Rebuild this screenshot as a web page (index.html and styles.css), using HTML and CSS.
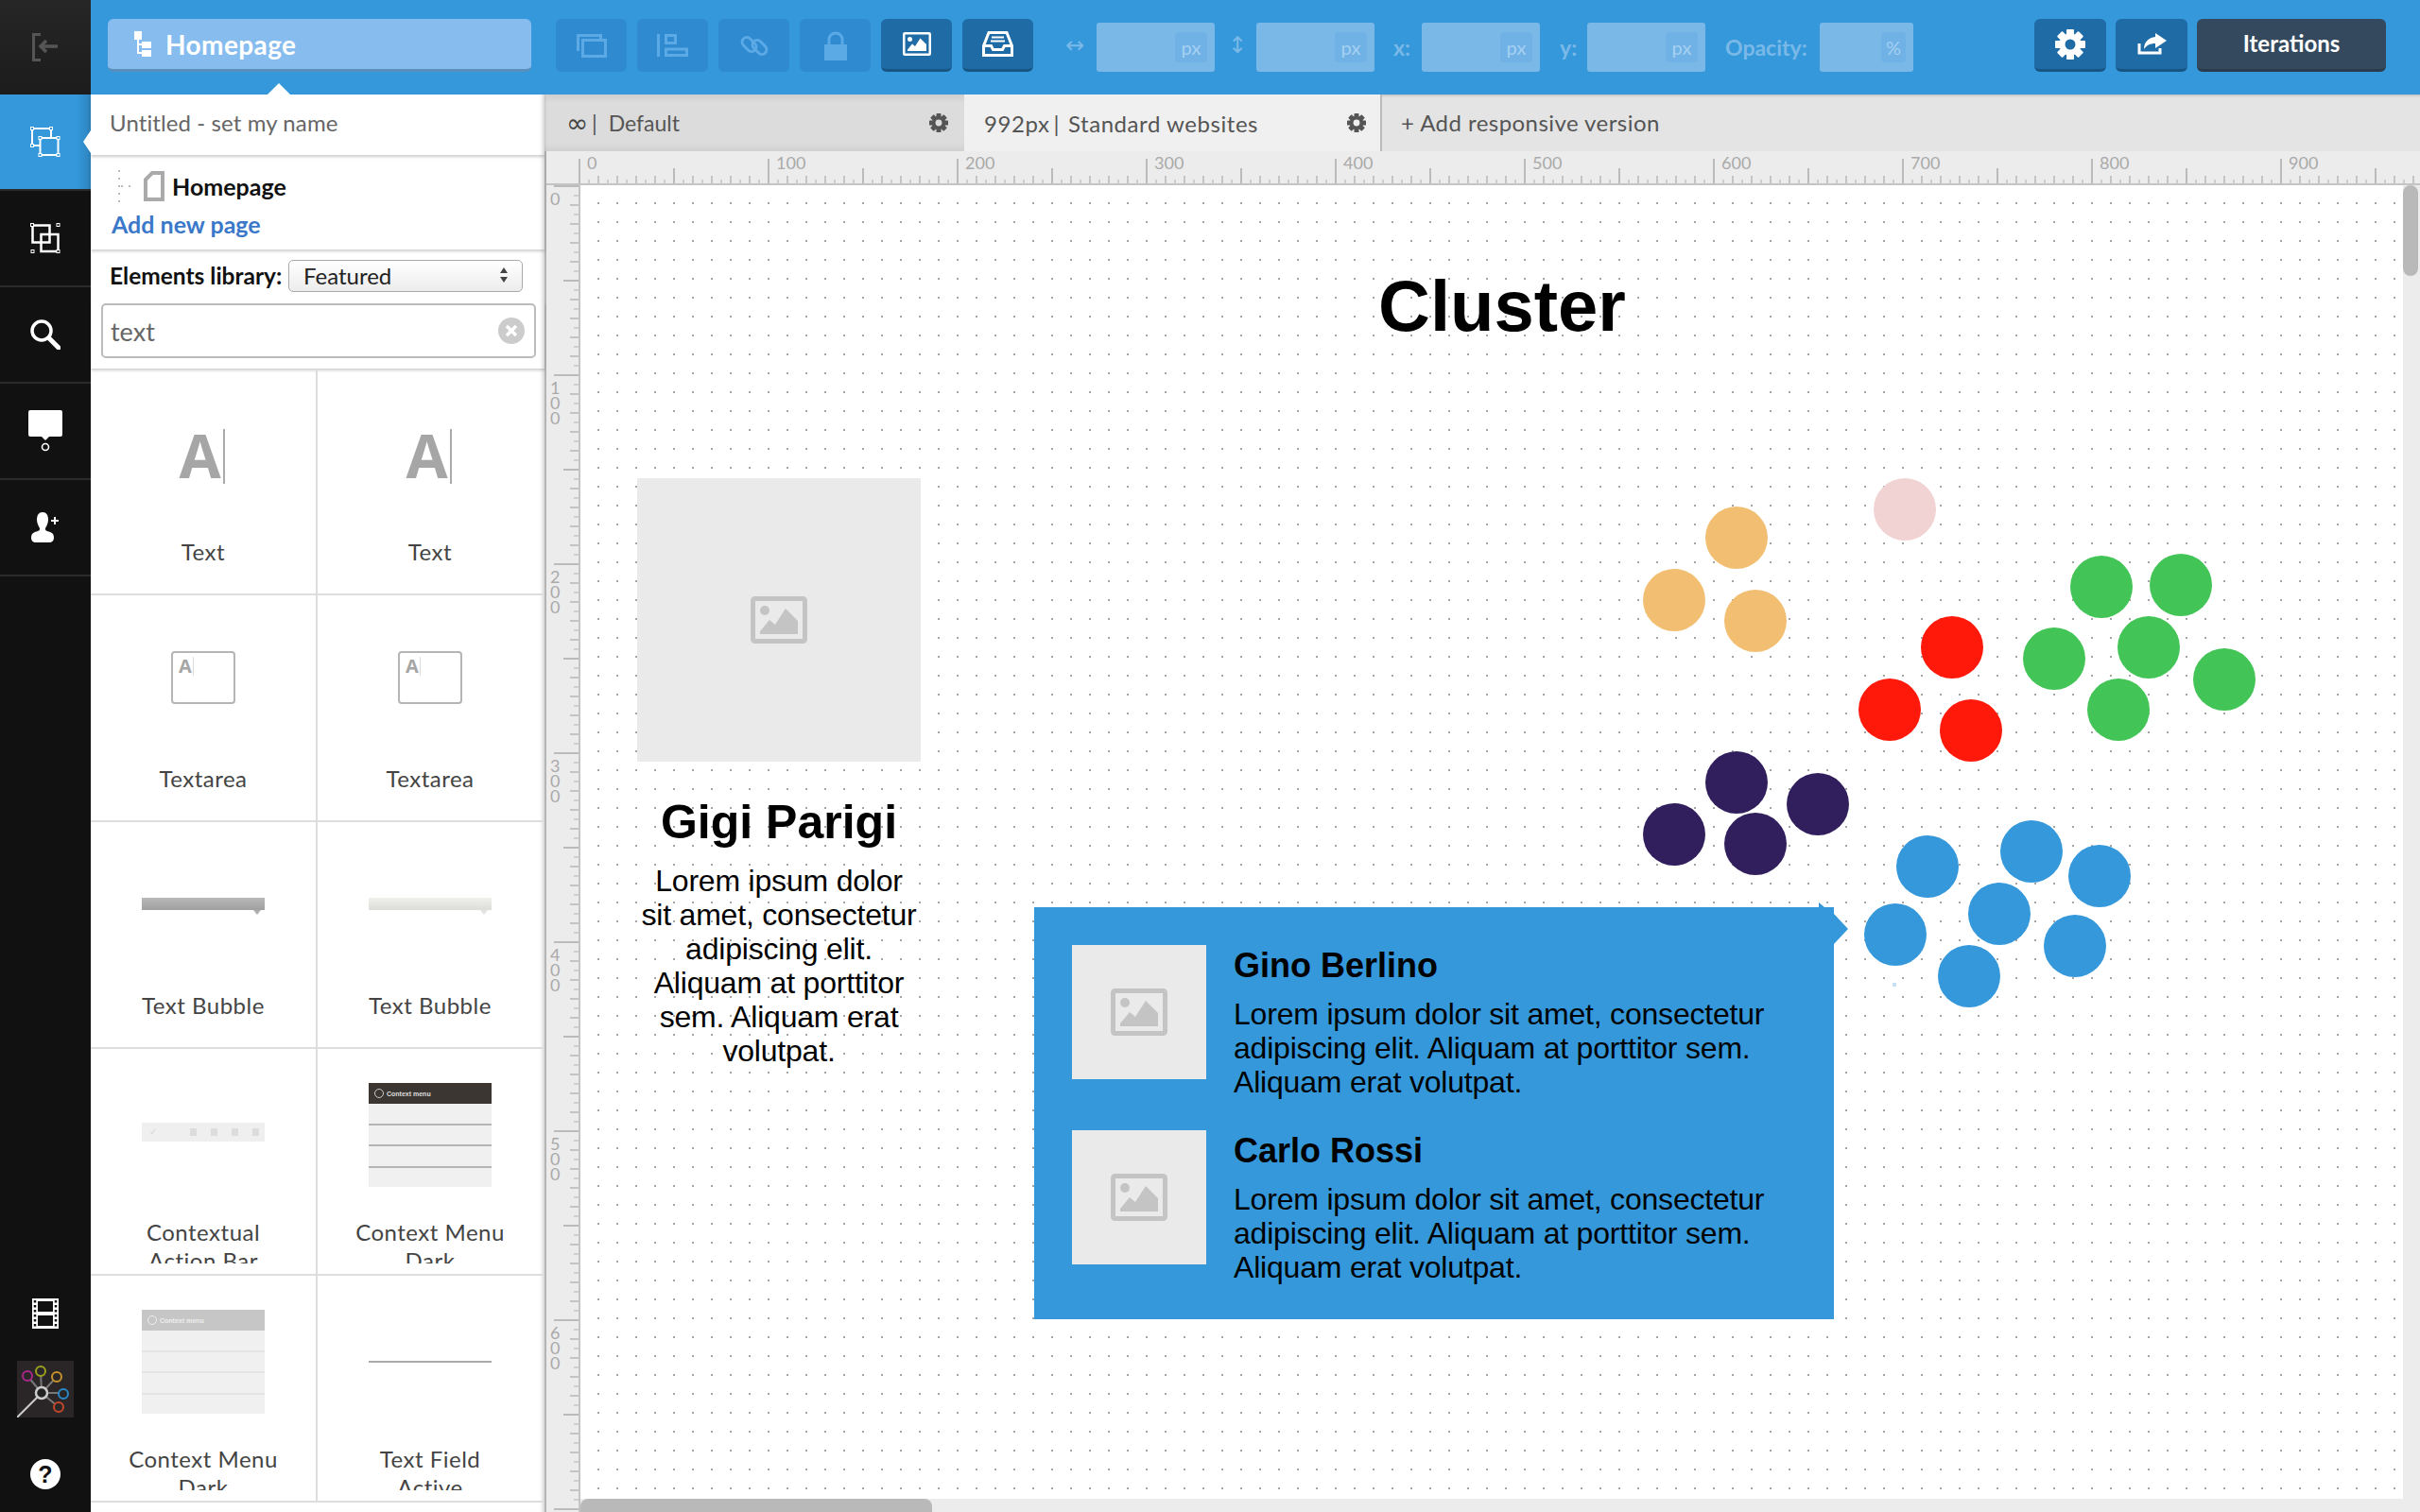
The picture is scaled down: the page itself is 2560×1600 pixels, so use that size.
FILE: index.html
```html
<!DOCTYPE html>
<html lang="en">
<head>
    <meta charset="UTF-8">
    <title>Cluster</title>
    <link rel="stylesheet" href="styles.css">
</head>
<body>

<svg class="sprites" width="0" height="0">
    <symbol id="gear" viewBox="0 0 32 32">
        <g fill="currentColor">
            <rect x="12" y="0" width="8" height="8" rx="1"/>
            <rect x="12" y="0" width="8" height="8" rx="1" transform="rotate(45 16 16)"/>
            <rect x="12" y="0" width="8" height="8" rx="1" transform="rotate(90 16 16)"/>
            <rect x="12" y="0" width="8" height="8" rx="1" transform="rotate(135 16 16)"/>
            <rect x="12" y="0" width="8" height="8" rx="1" transform="rotate(180 16 16)"/>
            <rect x="12" y="0" width="8" height="8" rx="1" transform="rotate(225 16 16)"/>
            <rect x="12" y="0" width="8" height="8" rx="1" transform="rotate(270 16 16)"/>
            <rect x="12" y="0" width="8" height="8" rx="1" transform="rotate(315 16 16)"/>
        </g>
        <circle cx="16" cy="16" r="8.5" fill="none" stroke="currentColor" stroke-width="6"/>
    </symbol>
    <symbol id="picture" viewBox="0 0 60 50">
        <rect x="2.5" y="2.5" width="55" height="45" rx="2" fill="none" stroke="currentColor" stroke-width="5"/>
        <circle cx="15" cy="15" r="5" fill="currentColor"/>
        <polygon points="10,40 10,37 20,25 26,30 37,13 50,26 50,40" fill="currentColor"/>
    </symbol>
</svg>

<div class="app">
    <nav class="rail">
        <div class="rail-exit">
            <svg width="28" height="30" viewBox="0 0 28 30" fill="none" stroke="#555" stroke-width="3">
                <path d="M9 1.5H1.5v27H9"/>
                <path d="M27 14H9M15 8l-6 6 6 6" stroke-width="3.5"/>
            </svg>
        </div>
        <div class="rail-item rail-item-active">
            <svg width="32" height="32" viewBox="0 0 32 32" fill="none" stroke="#fff" stroke-width="2">
                <rect x="2" y="2" width="20" height="18"/>
                <rect x="10.5" y="12" width="19" height="18" fill="#3498db"/>
                <rect x="0.5" y="0.5" width="3" height="3" fill="#3498db" stroke-width="1"/>
                <rect x="20.5" y="0.5" width="3" height="3" fill="#3498db" stroke-width="1"/>
                <rect x="0.5" y="18.5" width="3" height="3" fill="#3498db" stroke-width="1"/>
                <rect x="9" y="10.5" width="3" height="3" fill="#3498db" stroke-width="1"/>
                <rect x="28" y="10.5" width="3" height="3" fill="#3498db" stroke-width="1"/>
                <rect x="9" y="28.5" width="3" height="3" fill="#3498db" stroke-width="1"/>
                <rect x="28" y="28.5" width="3" height="3" fill="#3498db" stroke-width="1"/>
            </svg>
        </div>
        <div class="rail-item">
            <svg width="32" height="32" viewBox="0 0 32 32" fill="none" stroke="#fff">
                <rect x="2.5" y="2.5" width="18" height="18" stroke-width="2.5"/>
                <rect x="11.5" y="12" width="18" height="18" stroke-width="2.5"/>
                <rect x="28" y="0.5" width="3" height="3" stroke-width="1"/>
                <rect x="1" y="28.5" width="3" height="3" stroke-width="1"/>
                <rect x="0.5" y="0.5" width="3" height="3" fill="#111" stroke-width="1"/>
                <rect x="28" y="28.5" width="3" height="3" fill="#111" stroke-width="1"/>
            </svg>
        </div>
        <div class="rail-item">
            <svg width="32" height="32" viewBox="0 0 32 32" fill="none" stroke="#fff">
                <circle cx="12" cy="12" r="10" stroke-width="3.5"/>
                <path d="M20 20l10 10" stroke-width="5" stroke-linecap="round"/>
            </svg>
        </div>
        <div class="rail-item">
            <svg width="36" height="44" viewBox="0 0 36 44">
                <path d="M2 0h32a2 2 0 0 1 2 2v24a2 2 0 0 1-2 2H22l-4 4-4-4H2a2 2 0 0 1-2-2V2a2 2 0 0 1 2-2z" fill="#fff"/>
                <circle cx="18" cy="39" r="3.5" fill="none" stroke="#fff" stroke-width="1.6"/>
            </svg>
        </div>
        <div class="rail-item">
            <svg width="30" height="32" viewBox="0 0 30 32" fill="#fff">
                <path d="M12 0c4 0 6 3 6 8 0 4-2 7-3 9-.5 2 1 3 5 4 3 1 4 3 4 6 0 3-2 5-5 5H5c-3 0-5-2-5-5 0-3 1-5 4-6 4-1 5.500-2 5-4-1-2-3-5-3-9 0-5 2-8 6-8z"/>
                <path d="M24 5h2v3h3v2h-3v3h-2v-3h-3V8h3z"/>
            </svg>
        </div>
        <div class="rail-bottom">
            <svg width="28" height="32" viewBox="0 0 28 32">
                <rect width="28" height="32" fill="#fff"/>
                <rect x="6" y="3" width="16" height="11" fill="#111"/>
                <rect x="6" y="18" width="16" height="11" fill="#111"/>
                <path d="M3 2v28M25 2v28" stroke="#111" stroke-width="2.500" stroke-dasharray="2.500 2.500"/>
            </svg>
            <svg class="rail-logo" width="60" height="60" viewBox="0 0 60 60" fill="none" stroke-width="2">
                <rect width="60" height="60" fill="#2a2627"/>
                <path d="M26 34L11 16M26 34L25 11M26 34L42 17M26 34H49M26 34L44 49" stroke="#777"/>
                <path d="M26 34L0 60" stroke="#ccc"/>
                <circle cx="26" cy="34" r="6" fill="#222" stroke="#ccc" stroke-width="2.500"/>
                <circle cx="11" cy="16" r="5" fill="#2a2627" stroke="#a8278b"/>
                <circle cx="25" cy="11" r="5" fill="#2a2627" stroke="#9ba11f"/>
                <circle cx="42" cy="17" r="5" fill="#2a2627" stroke="#c4932a"/>
                <circle cx="49" cy="35" r="5" fill="#2a2627" stroke="#2a88c4"/>
                <circle cx="44" cy="49" r="5" fill="#2a2627" stroke="#c4472a"/>
            </svg>
            <div class="rail-help">?</div>
        </div>
    </nav>

    <div class="main">
        <header class="topbar">
            <div class="page-btn">
                <svg width="18" height="27" viewBox="0 0 18 27" fill="#fff">
                    <rect width="8" height="9"/>
                    <rect x="3" y="9" width="2" height="15"/>
                    <rect x="8" y="11" width="10" height="7"/>
                    <rect x="8" y="20" width="10" height="7"/>
                    <rect x="5" y="13" width="3" height="2"/>
                    <rect x="5" y="22" width="3" height="2"/>
                </svg>
                <span>Homepage</span>
            </div>
            <div class="tool-btn">
                <svg width="32" height="25" viewBox="0 0 32 25" fill="none" stroke="currentColor" stroke-width="3">
                    <path d="M1.500 18V1.500h24V6"/>
                    <rect x="6.500" y="6.500" width="24" height="17"/>
                </svg>
            </div>
            <div class="tool-btn">
                <svg width="33" height="24" viewBox="0 0 33 24" fill="none" stroke="currentColor" stroke-width="3">
                    <path d="M1.500 0v24"/>
                    <rect x="9.500" y="1.500" width="10" height="8"/>
                    <rect x="9.500" y="16" width="22" height="6.500"/>
                </svg>
            </div>
            <div class="tool-btn">
                <svg width="30" height="27" viewBox="0 0 30 27" fill="none" stroke="currentColor" stroke-width="3">
                    <rect x="1" y="7" width="17" height="10" rx="5" transform="rotate(45 9.500 12)"/>
                    <rect x="12" y="10" width="17" height="10" rx="5" transform="rotate(45 20.500 15)"/>
                </svg>
            </div>
            <div class="tool-btn">
                <svg width="24" height="31" viewBox="0 0 24 31">
                    <rect y="14" width="24" height="17" fill="currentColor"/>
                    <path d="M5 15V9a7 7 0 0 1 14 0v6" fill="none" stroke="currentColor" stroke-width="3"/>
                </svg>
            </div>
            <div class="tool-btn tool-btn-on">
                <svg width="32" height="25"><use href="#picture"/></svg>
            </div>
            <div class="tool-btn tool-btn-on">
                <svg width="33" height="27" viewBox="0 0 33 27" fill="none" stroke="currentColor" stroke-width="3">
                    <path d="M7 1.500h19l5.500 14v10h-30v-10z"/>
                    <path d="M1.500 15.500h8l2 4h10l2-4h8"/>
                    <path d="M10 6.500h13M9 10.500h15" stroke-width="2"/>
                </svg>
            </div>
            <span class="size-sign sign-w">↔</span>
            <div class="num-field"><span class="unit">px</span></div>
            <span class="size-sign sign-h">↕</span>
            <div class="num-field"><span class="unit">px</span></div>
            <span class="field-label label-x">x:</span>
            <div class="num-field"><span class="unit">px</span></div>
            <span class="field-label label-y">y:</span>
            <div class="num-field"><span class="unit">px</span></div>
            <span class="field-label label-op">Opacity:</span>
            <div class="num-field num-field-small"><span class="unit">%</span></div>
            <div class="top-right">
                <div class="tool-btn tool-btn-on tool-btn-thin">
                    <svg width="32" height="32"><use href="#gear"/></svg>
                </div>
                <div class="tool-btn tool-btn-on tool-btn-thin">
                    <svg width="31" height="23" viewBox="0 0 31 23">
                        <path d="M2 11v10h22v-5" fill="none" stroke="currentColor" stroke-width="3"/>
                        <path d="M19 0l12 8-12 8v-5c-6 0-9 2-12 6 0-8 5-12 12-13z" fill="currentColor"/>
                    </svg>
                </div>
                <div class="iter-btn">Iterations</div>
            </div>
        </header>

        <div class="work">
            <aside class="panel">
                <div class="panel-name">Untitled - set my name</div>
                <div class="panel-tree">
                    <div class="tree-row">
                        <svg width="20" height="36" viewBox="0 0 20 36" fill="none" stroke="#bbb" stroke-width="2" stroke-dasharray="2 6">
                            <path d="M2 1v34M4 18h16"/>
                        </svg>
                        <svg width="22" height="32" viewBox="0 0 22 32" fill="#fff" stroke="#aaa" stroke-width="4">
                            <path d="M9 2h11v28H2V9z"/>
                        </svg>
                        <span class="tree-name">Homepage</span>
                    </div>
                    <div class="add-page">Add new page</div>
                </div>
                <div class="lib-row">
                    <span class="lib-label">Elements library:</span>
                    <div class="lib-select">
                        <span>Featured</span>
                        <svg width="10" height="16" viewBox="0 0 10 16" fill="#444"><path d="M5 0l4 6H1zM5 16l4-6H1z"/></svg>
                    </div>
                </div>
                <div class="search-row">
                    <div class="search-box">
                        <span>text</span>
                        <svg width="28" height="28" viewBox="0 0 28 28">
                            <circle cx="14" cy="14" r="14" fill="#ccc"/>
                            <path d="M9 9l10 10M19 9L9 19" stroke="#fff" stroke-width="3.500"/>
                        </svg>
                    </div>
                </div>
                <div class="lib-grid">
                    <div class="lib-cell">
                        <div class="thumb"><span class="thumb-a">A</span><i class="thumb-caret"></i></div>
                        <div class="lib-name">Text</div>
                    </div>
                    <div class="lib-cell">
                        <div class="thumb"><span class="thumb-a">A</span><i class="thumb-caret"></i></div>
                        <div class="lib-name">Text</div>
                    </div>
                    <div class="lib-cell">
                        <div class="thumb"><div class="area-box"><span>A</span><i></i></div></div>
                        <div class="lib-name">Textarea</div>
                    </div>
                    <div class="lib-cell">
                        <div class="thumb"><div class="area-box"><span>A</span><i></i></div></div>
                        <div class="lib-name">Textarea</div>
                    </div>
                    <div class="lib-cell">
                        <div class="thumb"><div class="bubble"></div></div>
                        <div class="lib-name">Text Bubble</div>
                    </div>
                    <div class="lib-cell">
                        <div class="thumb"><div class="bubble bubble-light"></div></div>
                        <div class="lib-name">Text Bubble</div>
                    </div>
                    <div class="lib-cell">
                        <div class="thumb"><div class="action-bar"><span>✓</span><i></i><i></i><i></i><i></i></div></div>
                        <div class="lib-name">Contextual Action Bar</div>
                    </div>
                    <div class="lib-cell">
                        <div class="thumb thumb-top">
                            <div class="ctx-menu">
                                <div class="ctx-head"><i></i><span>Context menu</span></div>
                                <div class="ctx-row"></div><div class="ctx-row"></div><div class="ctx-row"></div><div class="ctx-row"></div>
                            </div>
                        </div>
                        <div class="lib-name">Context Menu Dark</div>
                    </div>
                    <div class="lib-cell">
                        <div class="thumb thumb-top">
                            <div class="ctx-menu ctx-light">
                                <div class="ctx-head"><i></i><span>Context menu</span></div>
                                <div class="ctx-row"></div><div class="ctx-row"></div><div class="ctx-row"></div><div class="ctx-row"></div>
                            </div>
                        </div>
                        <div class="lib-name">Context Menu Dark</div>
                    </div>
                    <div class="lib-cell">
                        <div class="thumb"><div class="field-line"></div></div>
                        <div class="lib-name">Text Field Active</div>
                    </div>
                </div>
            </aside>

            <section class="stage">
                <div class="tabs">
                    <div class="tab tab-default">
                        <span class="tab-size">∞</span><span class="tab-bar">|</span><span>Default</span>
                        <svg class="tab-gear" width="20" height="20"><use href="#gear"/></svg>
                    </div>
                    <div class="tab tab-current">
                        <span>992px</span><span class="tab-bar">|</span><span>Standard websites</span>
                        <svg class="tab-gear" width="20" height="20"><use href="#gear"/></svg>
                    </div>
                    <div class="tab-add">+ Add responsive version</div>
                </div>

                <div class="ruler-top">
                    <div class="ruler-corner"></div>
                    <div class="ruler-h">
                        <span>0</span><span>100</span><span>200</span><span>300</span><span>400</span>
                        <span>500</span><span>600</span><span>700</span><span>800</span><span>900</span>
                    </div>
                </div>

                <div class="stage-body">
                    <div class="ruler-v">
                        <span>0</span><span>100</span><span>200</span><span>300</span>
                        <span>400</span><span>500</span><span>600</span>
                    </div>
                    <div class="canvas">
                        <h1 class="cluster-title">Cluster</h1>

                        <div class="card">
                            <div class="ph ph-big"><svg width="60" height="50"><use href="#picture"/></svg></div>
                            <h2>Gigi Parigi</h2>
                            <p>Lorem ipsum dolor sit amet, consectetur adipiscing elit. Aliquam at porttitor sem. Aliquam erat volutpat.</p>
                        </div>

                        <div class="popup">
                            <div class="person">
                                <div class="ph ph-small"><svg width="60" height="50"><use href="#picture"/></svg></div>
                                <div class="person-text">
                                    <h3>Gino Berlino</h3>
                                    <p>Lorem ipsum dolor sit amet, consectetur adipiscing elit. Aliquam at porttitor sem. Aliquam erat volutpat.</p>
                                </div>
                            </div>
                            <div class="person">
                                <div class="ph ph-small"><svg width="60" height="50"><use href="#picture"/></svg></div>
                                <div class="person-text">
                                    <h3>Carlo Rossi</h3>
                                    <p>Lorem ipsum dolor sit amet, consectetur adipiscing elit. Aliquam at porttitor sem. Aliquam erat volutpat.</p>
                                </div>
                            </div>
                        </div>

                        <svg class="dots" width="680" height="600" viewBox="1720 490 680 600">
                            <g fill="#f2bf72">
                                <circle cx="1837" cy="569" r="33"/><circle cx="1771" cy="635" r="33"/><circle cx="1857" cy="657" r="33"/>
                            </g>
                            <circle cx="2015" cy="539" r="33" fill="#f0d3d2"/>
                            <g fill="#fe190b">
                                <circle cx="2065" cy="685" r="33"/><circle cx="1999" cy="751" r="33"/><circle cx="2085" cy="773" r="33"/>
                            </g>
                            <g fill="#42c456">
                                <circle cx="2223" cy="621" r="33"/><circle cx="2307" cy="619" r="33"/><circle cx="2273" cy="685" r="33"/>
                                <circle cx="2173" cy="697" r="33"/><circle cx="2241" cy="751" r="33"/><circle cx="2353" cy="719" r="33"/>
                            </g>
                            <g fill="#311e5c">
                                <circle cx="1837" cy="828" r="33"/><circle cx="1771" cy="883" r="33"/><circle cx="1857" cy="893" r="33"/><circle cx="1923" cy="851" r="33"/>
                            </g>
                            <g fill="#3498db">
                                <circle cx="2039" cy="917" r="33"/><circle cx="2149" cy="901" r="33"/><circle cx="2221" cy="927" r="33"/><circle cx="2115" cy="967" r="33"/>
                                <circle cx="2005" cy="989" r="33"/><circle cx="2195" cy="1001" r="33"/><circle cx="2083" cy="1033" r="33"/>
                            </g>
                            <rect x="2002" y="1040" width="4" height="4" fill="#c5e0f5"/>
                        </svg>

                        <div class="scroll-v"><div class="scroll-v-thumb"></div></div>
                        <div class="scroll-h"><div class="scroll-h-thumb"></div></div>
                    </div>
                </div>
            </section>
        </div>
    </div>
</div>

</body>
</html>
```

FILE: styles.css
```css
html, body {
    margin: 0;
    padding: 0;
}
body {
    width: 2560px;
    height: 1600px;
    overflow: hidden;
    font-family: Lato, "Open Sans", sans-serif;
    background-color: #fff;
}
.sprites {
    display: block;
    height: 0;
}
.app {
    display: flex;
    height: 1600px;
}

/* left rail */
.rail {
    width: 96px;
    flex: none;
    display: flex;
    flex-direction: column;
    background-color: #111;
}
.rail-exit {
    height: 100px;
    display: flex;
    align-items: center;
    justify-content: center;
    background: linear-gradient(#262626, #1c1c1c);
}
.rail-item {
    height: 100px;
    display: flex;
    align-items: center;
    justify-content: center;
    border-bottom: 2px solid #2b2b2b;
}
.rail-item-active {
    background: linear-gradient(to right, #3498db 85%, #2d83bd);
}
.rail-bottom {
    margin-top: auto;
    padding-bottom: 24px;
    display: flex;
    flex-direction: column;
    align-items: center;
}
.rail-logo {
    margin-top: 34px;
}
.rail-help {
    width: 32px;
    height: 32px;
    margin-top: 44px;
    border-radius: 50%;
    background-color: #fff;
    color: #111;
    font-family: "Liberation Sans", sans-serif;
    font-weight: bold;
    font-size: 25px;
    line-height: 32px;
    text-align: center;
}

.main {
    flex: 1;
    display: flex;
    flex-direction: column;
    min-width: 0;
}

/* top bar */
.topbar {
    height: 100px;
    flex: none;
    box-sizing: border-box;
    padding: 20px 36px 0 18px;
    display: flex;
    align-items: flex-start;
    background-color: #3498db;
}
.page-btn {
    width: 448px;
    height: 56px;
    box-sizing: border-box;
    margin-right: 26px;
    padding-left: 28px;
    display: flex;
    align-items: center;
    gap: 15px;
    border-radius: 6px;
    background-color: #87bcef;
    border-bottom: 3px solid #5a8fbd;
    color: #fff;
    font-weight: bold;
    font-size: 28px;
    letter-spacing: 0.4px;
}
.tool-btn {
    width: 75px;
    height: 56px;
    flex: none;
    box-sizing: border-box;
    margin-right: 11px;
    display: flex;
    align-items: center;
    justify-content: center;
    border-radius: 6px;
    background-color: #2f8ad0;
    color: #5baae6;
}
.tool-btn-on {
    background-color: #1e6ba5;
    border-bottom: 3px solid #175583;
    color: #fff;
}
.tool-btn-thin {
    width: 76px;
    margin-right: 10px;
}
.size-sign {
    color: #7ab8e8;
    font-family: "DejaVu Sans", sans-serif;
    font-size: 24px;
    line-height: 56px;
}
.sign-w {
    margin-left: 23px;
    width: 33px;
}
.sign-h {
    width: 34px;
    padding-right: 10px;
    text-align: right;
}
.num-field {
    width: 125px;
    height: 52px;
    flex: none;
    box-sizing: border-box;
    margin-top: 4px;
    padding: 10px 8px 10px 0;
    display: flex;
    justify-content: flex-end;
    border-radius: 3px;
    background-color: #7ab8e8;
}
.num-field-small {
    width: 99px;
}
.unit {
    width: 34px;
    height: 32px;
    border-radius: 4px;
    background-color: #70b2e6;
    color: #a5d0f1;
    font-size: 20px;
    line-height: 32px;
    text-align: center;
}
.num-field-small .unit {
    width: 26px;
}
.field-label {
    color: #7ab8e8;
    font-weight: bold;
    font-size: 23px;
    line-height: 60px;
}
.label-x, .label-y {
    margin-left: 20px;
    width: 30px;
}
.label-y {
    margin-left: 21px;
    width: 29px;
}
.label-op {
    margin-left: 21px;
    width: 100px;
}
.top-right {
    margin-left: auto;
    display: flex;
}
.iter-btn {
    width: 200px;
    height: 56px;
    box-sizing: border-box;
    border-radius: 6px;
    background-color: #34495e;
    border-bottom: 3px solid #2a3b4d;
    color: #fff;
    font-weight: bold;
    font-size: 24px;
    line-height: 52px;
    text-align: center;
}

.work {
    flex: 1;
    display: flex;
    min-height: 0;
}

/* elements panel */
.panel {
    width: 480px;
    flex: none;
    position: relative;
    z-index: 2;
    display: flex;
    flex-direction: column;
    background-color: #fff;
    box-shadow: inset -5px 0 5px -4px rgba(0, 0, 0, 0.25);
}
.panel:before {
    content: "";
    position: absolute;
    left: 187px;
    top: -12px;
    border-left: 12px solid transparent;
    border-right: 12px solid transparent;
    border-bottom: 12px solid #fff;
}
.panel:after {
    content: "";
    position: absolute;
    left: -8px;
    top: 38px;
    border-top: 12px solid transparent;
    border-bottom: 12px solid transparent;
    border-right: 8px solid #fff;
}
.panel-name {
    height: 64px;
    padding-left: 20px;
    color: #666;
    font-size: 24px;
    line-height: 60px;
    letter-spacing: 0.1px;
    box-shadow: 0 2px 3px rgba(0, 0, 0, 0.2);
}
.panel-tree {
    height: 100px;
    box-sizing: border-box;
    padding: 15px 0 0 22px;
    box-shadow: 0 2px 3px rgba(0, 0, 0, 0.2);
}
.tree-row {
    display: flex;
    align-items: center;
    gap: 8px;
    height: 36px;
}
.tree-row svg:first-child {
    margin-left: 6px;
}
.tree-name {
    font-weight: bold;
    font-size: 25px;
    color: #111;
}
.add-page {
    margin-top: 7px;
    color: #3b78c9;
    font-weight: bold;
    font-size: 25px;
    line-height: 30px;
}
.lib-row {
    height: 56px;
    box-sizing: border-box;
    padding: 11px 0 0 20px;
    display: flex;
    align-items: flex-start;
}
.lib-label {
    width: 189px;
    color: #111;
    font-weight: bold;
    font-size: 24.500px;
    line-height: 34px;
}
.lib-select {
    width: 248px;
    height: 34px;
    box-sizing: border-box;
    padding: 0 14px 2px 15px;
    display: flex;
    align-items: center;
    justify-content: space-between;
    border: 1px solid #aaa;
    border-radius: 5px;
    background: linear-gradient(#fff, #ececec);
    color: #222;
    font-size: 24px;
}
.search-row {
    height: 70px;
    padding: 1px 0 0 11px;
    box-sizing: border-box;
    box-shadow: 0 2px 3px rgba(0, 0, 0, 0.2);
}
.search-box {
    width: 460px;
    height: 58px;
    box-sizing: border-box;
    padding: 0 10px 0 8px;
    display: flex;
    align-items: center;
    justify-content: space-between;
    border: 2px solid #bbb;
    border-radius: 5px;
    color: #666;
    font-size: 27px;
}
.lib-grid {
    display: grid;
    grid-template-columns: 240px 240px;
    grid-auto-rows: 240px;
}
.lib-cell {
    box-sizing: border-box;
    border-right: 2px solid #ddd;
    border-bottom: 2px solid #ddd;
    overflow: hidden;
}
.lib-cell:nth-child(even) {
    border-right: none;
    padding-right: 2px;
}
.thumb {
    height: 179px;
    box-sizing: border-box;
    padding-bottom: 2px;
    display: flex;
    align-items: center;
    justify-content: center;
}
.thumb-top {
    align-items: flex-start;
    padding-top: 36px;
}
.lib-name {
    height: 48px;
    width: 170px;
    margin: 0 auto;
    color: #444;
    font-size: 24px;
    line-height: 30px;
    letter-spacing: 0.5px;
    text-align: center;
    overflow: hidden;
}
.thumb-a {
    margin: 6px 0 0 -3px;
    color: #a6a6a6;
    font-family: "Open Sans", sans-serif;
    font-weight: bold;
    font-size: 64px;
    line-height: 70px;
}
.thumb-caret {
    width: 2px;
    height: 58px;
    margin: 8px 0 0 2px;
    background-color: #aaa;
}
.area-box {
    width: 68px;
    height: 56px;
    box-sizing: border-box;
    margin-bottom: 4px;
    padding: 2px 6px;
    display: flex;
    align-items: flex-start;
    border: 2px solid #b5b5b5;
    border-radius: 4px;
    color: #a6a6a6;
    font-family: "Open Sans", sans-serif;
    font-weight: bold;
    font-size: 20px;
    line-height: 24px;
}
.area-box i {
    width: 1px;
    height: 20px;
    margin: 2px 0 0 1px;
    background-color: #ddd;
}
.bubble {
    width: 130px;
    height: 13px;
    margin-bottom: 4px;
    position: relative;
    background: linear-gradient(#b8b8b8, #a0a0a0);
}
.bubble:after {
    content: "";
    position: absolute;
    right: 4px;
    top: 13px;
    border-left: 4px solid transparent;
    border-right: 4px solid transparent;
    border-top: 5px solid #b0b0b0;
}
.bubble-light {
    background: linear-gradient(#f0f0ec, #dcdcd8);
}
.bubble-light:after {
    border-top-color: #e2e2de;
}
.action-bar {
    width: 130px;
    height: 20px;
    box-sizing: border-box;
    margin-bottom: 2px;
    padding: 0 6px 0 8px;
    display: flex;
    align-items: center;
    gap: 15px;
    background-color: #efefef;
    color: #d6d6d6;
    font-family: "DejaVu Sans", sans-serif;
    font-size: 10px;
}
.action-bar span {
    flex: 1;
}
.action-bar i {
    width: 7px;
    height: 8px;
    background-color: #dcdcdc;
}
.ctx-menu {
    width: 130px;
    height: 110px;
    background-color: #f0f0f0;
}
.ctx-head {
    height: 22px;
    box-sizing: border-box;
    padding-left: 6px;
    display: flex;
    align-items: center;
    gap: 3px;
    background-color: #3c3632;
    color: #ddd;
    font-family: "Liberation Sans", sans-serif;
    font-weight: bold;
    font-size: 7px;
}
.ctx-head i {
    width: 8px;
    height: 8px;
    border: 1px solid #ccc;
    border-radius: 50%;
}
.ctx-row {
    height: 20.500px;
    border-bottom: 2px solid #b5b5b5;
}
.ctx-row:last-child {
    border-bottom: none;
}
.ctx-light .ctx-head {
    background-color: #c6c6c6;
    color: #eee;
}
.ctx-light .ctx-head i {
    border-color: #eee;
}
.ctx-light .ctx-row {
    border-bottom-color: #e4e4e4;
}
.ctx-light .ctx-row:last-child {
    border-bottom: none;
}
.field-line {
    width: 130px;
    height: 2px;
    margin-top: 4px;
    background-color: #aaa;
}

/* stage */
.stage {
    flex: 1;
    min-width: 0;
    display: flex;
    flex-direction: column;
}
.tabs {
    height: 60px;
    flex: none;
    display: flex;
    background-color: #e4e4e4;
    box-shadow: inset 0 3px 3px -2px rgba(0, 0, 0, 0.2);
    color: #555;
    font-size: 23px;
}
.tab {
    height: 60px;
    box-sizing: border-box;
    display: flex;
    align-items: center;
    position: relative;
}
.tab-default {
    width: 444px;
    padding-left: 23px;
    background: linear-gradient(#cfcfcf, #dcdcdc 15%, #dcdcdc 85%, #d0d0d0);
}
.tab-current {
    width: 442px;
    padding-left: 21px;
    border-right: 2px solid #bbb;
    background-color: #f0f0f0;
    font-size: 24px;
    letter-spacing: 0.55px;
}
.tab-size {
    width: 20px;
    font-family: "DejaVu Sans", sans-serif;
    font-size: 28px;
    color: #444;
}
.tab-bar {
    margin: 0 12px 0 7px;
}
.tab-current .tab-bar {
    margin: 0 9px 0 4px;
}
.tab-gear {
    position: absolute;
    right: 17px;
    top: 20px;
}
.tab-current .tab-gear {
    right: 15px;
}
.tab-add {
    padding-left: 20px;
    font-size: 24px;
    letter-spacing: 0.45px;
    line-height: 60px;
}

/* rulers */
.ruler-top {
    height: 36px;
    flex: none;
    display: flex;
    border-left: 2px solid #b5b5b5;
    background-color: #ececec;
}
.ruler-corner {
    width: 34px;
    flex: none;
    border-bottom: 2px solid #c4c4c4;
}
.ruler-h {
    flex: 1;
    display: flex;
    overflow: hidden;
    border-bottom: 2px solid #c4c4c4;
    background-image:
        linear-gradient(to right, #bbb 2px, transparent 2px),
        linear-gradient(to right, #bbb 2px, transparent 2px),
        linear-gradient(to right, #c4c4c4 2px, transparent 2px),
        linear-gradient(to right, #cfcfcf 2px, transparent 2px);
    background-size: 200px 26px, 100px 16px, 20px 8px, 10px 4px;
    background-position: 0 bottom;
    background-repeat: repeat-x;
    color: #aaa;
    font-size: 18px;
    line-height: 24px;
}
.ruler-h span {
    width: 191px;
    flex: none;
    padding-left: 9px;
}
.stage-body {
    flex: 1;
    display: flex;
    min-height: 0;
}
.ruler-v {
    width: 38px;
    flex: none;
    box-sizing: border-box;
    border-left: 2px solid #b5b5b5;
    border-right: 2px solid #c4c4c4;
    background-color: #ececec;
    background-image:
        linear-gradient(#bbb 2px, transparent 2px),
        linear-gradient(#bbb 2px, transparent 2px),
        linear-gradient(#c4c4c4 2px, transparent 2px),
        linear-gradient(#cfcfcf 2px, transparent 2px);
    background-size: 26px 200px, 16px 100px, 9px 20px, 5px 10px;
    background-position: right 0;
    background-repeat: repeat-y;
    color: #aaa;
    font-size: 18px;
    line-height: 16px;
}
.ruler-v span {
    display: block;
    box-sizing: border-box;
    height: 200px;
    width: 15px;
    margin-left: 4px;
    padding-top: 6px;
    word-break: break-all;
}

/* canvas */
.canvas {
    flex: 1;
    position: relative;
    overflow: hidden;
    background-color: #fff;
    background-image: radial-gradient(circle, #a5a5a5 1px, transparent 1.400px);
    background-size: 20px 20px;
    background-position: 9px 9px;
    font-family: "Liberation Sans", Arial, sans-serif;
    color: #000;
}
.cluster-title {
    position: absolute;
    left: 775px;
    top: 86px;
    width: 400px;
    margin: 0;
    font-size: 76px;
    line-height: 84px;
    text-align: center;
}
.card {
    position: absolute;
    left: 60px;
    top: 310px;
    width: 300px;
    text-align: center;
}
.card h2 {
    margin: 35px 0 15px;
    font-size: 50px;
    line-height: 58px;
}
.card p, .person-text p {
    margin: 0;
    font-size: 32px;
    line-height: 36px;
    letter-spacing: -0.2px;
}
.ph {
    display: flex;
    align-items: center;
    justify-content: center;
    background-color: #eaeaea;
    color: #c4c4c4;
}
.ph-big {
    height: 300px;
}
.ph-small {
    width: 142px;
    height: 142px;
    flex: none;
}
.popup {
    position: absolute;
    left: 480px;
    top: 764px;
    width: 846px;
    height: 436px;
    box-sizing: border-box;
    padding: 40px;
    display: flex;
    flex-direction: column;
    gap: 54px;
    background-color: #3498db;
}
.popup:before {
    content: "";
    position: absolute;
    left: 830px;
    top: -5px;
    border-bottom: 5px solid #3498db;
    border-right: 6px solid transparent;
}
.popup:after {
    content: "";
    position: absolute;
    left: 846px;
    top: 7px;
    border-top: 16px solid transparent;
    border-bottom: 16px solid transparent;
    border-left: 15px solid #3498db;
}
.person {
    height: 142px;
    display: flex;
    gap: 29px;
}
.person-text h3 {
    margin: 0 0 11px;
    font-size: 36px;
    line-height: 44px;
}
.person-text {
    width: 590px;
}
.dots {
    position: absolute;
    left: 1106px;
    top: 294px;
}
.scroll-v {
    position: absolute;
    right: 0;
    top: 0;
    bottom: 0;
    width: 18px;
    background-color: #ececec;
}
.scroll-v-thumb {
    width: 16px;
    height: 96px;
    border-radius: 8px;
    background-color: #b9b9b9;
}
.scroll-h {
    position: absolute;
    left: 0;
    right: 0;
    bottom: 0;
    height: 14px;
    background-color: #ececec;
}
.scroll-h-thumb {
    width: 372px;
    height: 14px;
    border-radius: 8px 8px 0 0;
    background-color: #b9b9b9;
}
```
